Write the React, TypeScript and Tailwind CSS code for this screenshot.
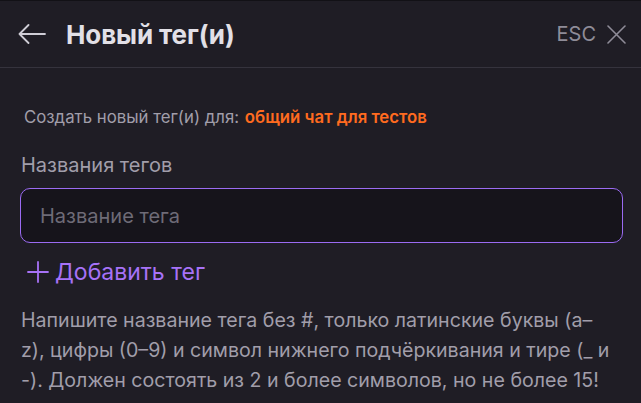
import React, { useState } from "react";

export default function App() {
  const [tagName, setTagName] = useState("");

  return (
    <div className="w-[641px] h-[403px] overflow-hidden bg-[#1f1d25] border-t border-[#121116] font-['Inter',sans-serif]">
      {/* Header */}
      <div className="h-[67px] flex items-center justify-between pl-[18px] pr-[15px] border-b border-[#35333d]">
        <div className="flex items-center">
          <svg width="28" height="20" viewBox="0 0 28 20" fill="none" stroke="#cfcdd6" strokeWidth="1.8" strokeLinecap="round" strokeLinejoin="round">
            <path d="M27 10H1.5M10.5 1L1.5 10l9 9" />
          </svg>
          <h1 className="ml-[20px] text-[26px] font-bold text-[#e2e0e7] tracking-[-0.1px]">Новый тег(и)</h1>
        </div>
        <div className="flex items-center">
          <span className="text-[20px] text-[#8f8c98]">ESC</span>
          <svg className="ml-[11px]" width="19" height="19" viewBox="0 0 19 19" fill="none" stroke="#8f8c98" strokeWidth="1.6" strokeLinecap="round">
            <path d="M1 1l17 17M18 1L1 18" />
          </svg>
        </div>
      </div>

      {/* Body */}
      <div className="px-[20px]">
        <p className="mt-[38px] ml-[4px] text-[16.8px] leading-[22px] text-[#a19eaa]">
          Создать новый тег(и) для:{" "}
          <span className="ml-[1px] font-semibold text-[#ff6b1f]">общий чат для тестов</span>
        </p>

        <p className="mt-[24px] ml-[1px] text-[20px] leading-[26px] text-[#a19eaa]">Названия тегов</p>

        <input
          type="text"
          value={tagName}
          onChange={(e) => setTagName(e.target.value)}
          placeholder="Название тега"
          className="mt-[10px] block w-[603px] h-[55px] rounded-[10px] border border-[#9b6bf2] bg-[#16141b] px-[19px] text-[20px] text-[#e2e0e7] placeholder:text-[#6e6b77] outline-none"
        />

        <button className="mt-[15px] flex items-center text-[#a772f7]">
          <svg className="ml-[7px]" width="22" height="22" viewBox="0 0 22 22" fill="none" stroke="#a772f7" strokeWidth="1.8" strokeLinecap="round">
            <path d="M11 1v20M1 11h20" />
          </svg>
          <span className="ml-[6px] text-[23px] leading-[28px]">Добавить тег</span>
        </button>

        <p className="mt-[19px] ml-[1px] whitespace-nowrap text-[19.6px] leading-[30px] text-[#a19eaa]">
          Напишите название тега без #, только латинские буквы (a–
          <br />
          z), цифры (0–9) и символ нижнего подчёркивания и тире (_ и
          <br />
          -). Должен состоять из 2 и более символов, но не более 15!
        </p>
      </div>
    </div>
  );
}
